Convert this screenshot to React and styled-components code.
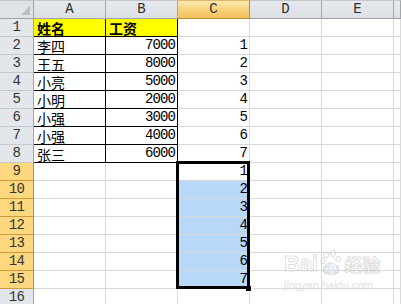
import React from "react";
import styled, { createGlobalStyle, css } from "styled-components";

const GlobalStyle = createGlobalStyle`
  html, body { margin: 0; padding: 0; background: #ffffff; overflow: hidden; }
  #root { width: 401px; height: 304px; overflow: hidden; }
`;

const Wrap = styled.div`
  position: relative;
  width: 401px;
  height: 304px;
  overflow: hidden;
  font-family: "Liberation Mono", "Noto Sans CJK SC", monospace;
`;

const Sheet = styled.div`
  display: grid;
  grid-template-columns: 34px repeat(5, 72px) 1fr;
  grid-template-rows: 19px repeat(16, 18px);
`;

const Corner = styled.div`
  position: relative;
  box-sizing: border-box;
  background: #dfe3e8;
  border-right: 1px solid #9ea3a8;
  border-bottom: 1px solid #9ea3a8;
  border-top: 1px solid #c3c7cc;
  &::after {
    content: "";
    position: absolute;
    right: 3px;
    bottom: 3px;
    width: 0;
    height: 0;
    border-left: 9px solid transparent;
    border-bottom: 9px solid #b9bec4;
  }
`;

const ColHead = styled.div`
  box-sizing: border-box;
  display: flex;
  align-items: flex-end;
  justify-content: center;
  padding-bottom: 1px;
  font-family: "Liberation Mono", monospace;
  font-size: 14px;
  line-height: 15px;
  color: #2d2d2d;
  border-top: 1px solid #c3c7cc;
  border-right: 1px solid #a3a7ac;
  border-bottom: 1px solid #9ea3a8;
  background: linear-gradient(#e6e9ed, #dce0e5);
  ${(p) =>
    p.$active &&
    css`
      background: linear-gradient(#fdeab0, #f7ce73 60%, #f3c25f);
      border-right-color: #c28a30;
      border-bottom-color: #c28a30;
      border-top-color: #e3b767;
    `}
`;

const RowHead = styled.div`
  box-sizing: border-box;
  display: flex;
  align-items: flex-end;
  justify-content: center;
  padding-bottom: 1px;
  font-family: "Liberation Mono", monospace;
  font-size: 14px;
  line-height: 15px;
  letter-spacing: -0.6px;
  color: #333;
  background: #e3e7ec;
  border-right: 1px solid #9ea3a8;
  border-bottom: 1px solid #c4c9cf;
  ${(p) =>
    p.$active &&
    css`
      background: #fed87f;
      border-right-color: #c28a30;
      border-bottom-color: #d19a3e;
    `}
`;

const Cell = styled.div`
  box-sizing: border-box;
  display: flex;
  align-items: flex-end;
  justify-content: ${(p) => (p.$right ? "flex-end" : "flex-start")};
  padding: 0 ${(p) => (p.$right ? "2px" : "0")} 0 ${(p) => (p.$right ? "0" : "3px")};
  font-size: 14px;
  line-height: 16px;
  color: #000;
  white-space: nowrap;
  overflow: hidden;
  background: ${(p) => p.$bg || "#ffffff"};
  border-right: 1px solid ${(p) => (p.$black ? "#000" : "#d9d9d9")};
  border-bottom: 1px solid ${(p) => (p.$black ? "#000" : "#d9d9d9")};
  font-weight: ${(p) => (p.$bold ? 700 : 400)};
`;

const Num = styled.span`
  font-family: "Liberation Mono", monospace;
  letter-spacing: -0.9px;
  padding-bottom: 1px;
`;

const Han = styled.span`
  font-family: "Noto Sans CJK SC", sans-serif;
  font-size: 14px;
  line-height: 16px;
`;

const Selection = styled.div`
  position: absolute;
  left: 176px;
  top: 161px;
  width: 74px;
  height: 128px;
  box-sizing: border-box;
  border: 3px solid #000;
  pointer-events: none;
`;

const Handle = styled.div`
  position: absolute;
  left: 246px;
  top: 286px;
  width: 5px;
  height: 5px;
  background: #000;
  border: 1px solid #fff;
  border-top: none;
  border-left: none;
`;

const Watermark = styled.div`
  position: absolute;
  left: 284px;
  top: 250px;
  display: flex;
  flex-direction: column;
  align-items: flex-start;
  pointer-events: none;
`;

const WmTop = styled.div`
  display: flex;
  align-items: flex-end;
  gap: 2px;
  font-family: "Liberation Sans", "Noto Sans CJK SC", sans-serif;
  font-size: 22px;
  font-weight: 700;
  line-height: 24px;
  color: rgba(255, 255, 255, 0.55);
  -webkit-text-stroke: 1px rgba(160, 160, 160, 0.35);
`;

const WmSub = styled.div`
  font-family: "Liberation Sans", sans-serif;
  font-size: 11px;
  line-height: 13px;
  margin-top: 3px;
  color: rgba(255, 255, 255, 0.6);
  -webkit-text-stroke: 0.6px rgba(160, 160, 160, 0.3);
`;

const PawBox = styled.span`
  position: relative;
  display: inline-flex;
  align-items: flex-end;
  width: 22px;
  height: 26px;
  font-size: 13px;
  line-height: 15px;
`;

const Paw = () => (
  <svg width="22" height="26" viewBox="0 0 22 26" style={{ position: "absolute", left: 0, top: 0 }}>
    <g fill="rgba(255,255,255,0.4)" stroke="rgba(160,160,160,0.4)" strokeWidth="1">
      <ellipse cx="6" cy="5" rx="2.5" ry="3" />
      <ellipse cx="13" cy="3.5" rx="2.5" ry="3" />
      <ellipse cx="3" cy="11" rx="2.2" ry="2.8" />
      <ellipse cx="18" cy="9" rx="2.2" ry="2.8" />
      <path d="M4 22 C2 17 7 13 10 13 C14 13 19 17 18 22 C17 25 5 25 4 22 Z" />
    </g>
  </svg>
);

const cols = ["A", "B", "C", "D", "E", ""];

const table = [
  ["姓名", "工资", ""],
  ["李四", "7000", "1"],
  ["王五", "8000", "2"],
  ["小亮", "5000", "3"],
  ["小明", "2000", "4"],
  ["小强", "3000", "5"],
  ["小强", "4000", "6"],
  ["张三", "6000", "7"],
];

function Row({ n }) {
  const inTable = n <= 8;
  const selRow = n >= 9 && n <= 15;
  const rowData = inTable ? table[n - 1] : ["", "", selRow ? String(n - 8) : ""];
  const header = n === 1;
  return (
    <>
      <RowHead $active={selRow}>{n}</RowHead>
      <Cell $black={inTable} $bg={header ? "#ffff00" : undefined} $bold={header}>
        <Han>{rowData[0]}</Han>
      </Cell>
      <Cell $black={inTable} $right={!header} $bg={header ? "#ffff00" : undefined} $bold={header}>
        {header ? <Han>{rowData[1]}</Han> : <Num>{rowData[1]}</Num>}
      </Cell>
      <Cell $right $bg={selRow && n > 9 ? "#b9d7f8" : undefined}>
        <Num>{rowData[2]}</Num>
      </Cell>
      <Cell />
      <Cell />
      <Cell />
    </>
  );
}

export default function App() {
  return (
    <Wrap>
      <GlobalStyle />
      <Sheet>
        <Corner />
        {cols.map((c, i) => (
          <ColHead key={i} $active={c === "C"}>
            {c}
          </ColHead>
        ))}
        {Array.from({ length: 16 }, (_, i) => (
          <Row key={i} n={i + 1} />
        ))}
      </Sheet>
      <Selection />
      <Handle />
      <Watermark>
        <WmTop>
          <span>Bai</span>
          <PawBox>
            <Paw />
            <span style={{ position: "relative", marginLeft: 3 }}>du</span>
          </PawBox>
          <span style={{ fontFamily: "Noto Sans CJK SC, sans-serif", fontSize: 18 }}>经验</span>
        </WmTop>
        <WmSub>jingyan.baidu.com</WmSub>
      </Watermark>
    </Wrap>
  );
}
